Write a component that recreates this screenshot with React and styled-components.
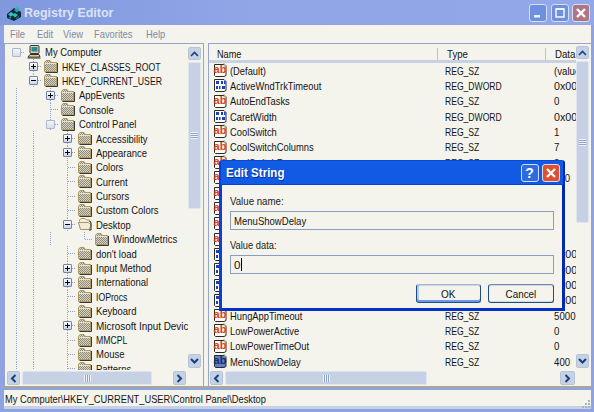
import React from "react";
import styled, { createGlobalStyle } from "styled-components";

const Global = createGlobalStyle`
  html, body { margin: 0; padding: 0; width: 594px; height: 412px; overflow: hidden; background: #8fa3e3; }
  * { box-sizing: border-box; }
  #root { width: 594px; height: 412px; }
`;

const FONT = `"Liberation Sans", Arial, sans-serif`;
const BG = "#f4f3ec";
const PALE = "#c6d1e4";

const Win = styled.div`
  position: relative;
  width: 594px; height: 412px;
  display: flex; flex-direction: column;
  padding: 0 3px 3px 4px;
  background: #8fa3e3;
  font: 11px/14px ${FONT};
  color: #141414;
  overflow: hidden;
`;
/* The reference's face is as tall as 11px Arial but narrower: each text is condensed by its own factor. */
const Txt = styled.span`
  display: inline-block;
  white-space: nowrap;
  transform: scaleX(${p => p.$s || 0.85});
  transform-origin: ${p => p.$center ? "center" : "left"} center;
`;
const TitleBar = styled.div`
  height: 25px; flex: none;
  display: flex; align-items: center;
  margin: 0 -3px 0 -4px; padding: 0 4px 0 4px;
  background: linear-gradient(90deg, #7f98de, #90a5e6 40%, #93a8e8);
`;
const TitleIcon = styled.svg`width: 16px; height: 16px; margin: 0 2px 0 2px; flex: none;`;
const TitleText = styled.div`
  flex: 1;
  font: bold 13px/18px ${FONT};
  color: #dbe3f6;
`;
const WinBtn = styled.div`
  width: 18px; height: 18px; margin-left: 3.5px; flex: none;
  border: 1px solid #d6def5; border-radius: 3px;
  background: ${p => p.$bg};
  display: flex; align-items: center; justify-content: center;
`;
const HelpMark = styled.span`color: #fff; font: bold 14px ${FONT};`;
const MenuBar = styled.div`
  height: 18px; flex: none; background: ${BG};
  display: flex; align-items: center;
  padding-left: 6px;
  font-size: 11px; color: #7d8aa6;
`;
const MenuItem = styled.span`margin-right: ${p => p.$gap}px;`;
const Panes = styled.div`
  height: 345px; flex: none; display: flex; background: ${BG};
  border-bottom: 2px solid #a9a793;
`;
const Pane = styled.div`
  width: ${p => p.$w}px; flex: none;
  display: flex; flex-direction: column;
  border: 1px solid #96a5c8; border-bottom: 0;
  ${p => p.$last ? "border-right: 0;" : ""}
  margin-right: ${p => p.$mr || 0}px;
  min-height: 0;
`;
const PaneMain = styled.div`flex: 1; display: flex; min-height: 0;`;
const Tree = styled.div`flex: 1; min-width: 0; overflow: hidden; padding-left: 3px; padding-top: 1px;`;
const TreeRow = styled.div`height: 14.4px; display: flex; align-items: center; white-space: nowrap; width: 200px;`;
const dots = "repeating-linear-gradient(180deg,#8ea0d4 0 1px,transparent 1px 2px)";
const dotsH = "repeating-linear-gradient(90deg,#8ea0d4 0 1px,transparent 1px 2px)";
const Guide = styled.div`
  width: 17px; height: 100%; flex: none;
  background: ${p => p.$on ? dots : "none"} center / 1px 100% no-repeat;
`;
const Conn = styled.div`
  width: 17px; height: 100%; flex: none;
  display: flex; align-items: center; justify-content: center;
  background:
    ${p => p.$v === "none" ? "linear-gradient(transparent,transparent)" : dots} center ${p => p.$v === "up" ? "top" : "center"} / 1px ${p => p.$v === "up" ? "50%" : "100%"} no-repeat,
    ${dotsH} right center / 50% 1px no-repeat;
`;
const Box = styled.div`
  width: 9px; height: 9px;
  border: 1px solid ${p => p.$pale ? "#a9b7d3" : "#6f84ac"};
  border-radius: 1px;
  background: ${p => p.$pale ? "linear-gradient(#f6f6f0,#d8deea)" : "linear-gradient(#fbfbf8,#cdd6e8)"};
  display: flex; align-items: center; justify-content: center;
  color: #000;
`;
const FolderSvg = styled.svg`width: 14px; height: 13px; flex: none; margin-left: 2px;`;
const ComputerSvg = styled.svg`width: 14px; height: 14px; flex: none; margin-left: 2px;`;
const TreeLabel = styled.span`margin-left: 4px; font-size: 11px; display: inline-flex;`;

const VBar = styled.div`
  width: 13px; flex: none; margin: ${p => p.$top}px ${p => p.$right}px 2px 0;
  display: flex; flex-direction: column;
`;
const HBar = styled.div`
  height: 14px; flex: none; margin: 1px ${p => p.$right}px 1px ${p => p.$left}px;
  display: flex; align-items: stretch;
`;
const SBtn = styled.div`
  flex: none; width: ${p => p.$w || 13}px; height: ${p => p.$h || 13}px;
  background: ${PALE};
  border: 1px solid #eef1f6; outline: 1px solid #b6c3da; outline-offset: -1px;
  border-radius: 2px;
  display: flex; align-items: center; justify-content: center;
  color: #16407e;
`;
const Thumb = styled.div`
  flex: none;
  ${p => p.$h ? `width:${p.$len}px;` : `height:${p.$len}px;`}
  margin: ${p => p.$h ? "0 0 0 2px" : "2px 0 0 0"};
  background: ${PALE};
  border: 1px solid #dfe5f0;
  border-radius: 2px;
  display: flex; align-items: center; justify-content: center;
`;
const GripV = styled.div`
  width: 7px; height: 7px;
  background: repeating-linear-gradient(180deg,#f0f3fa 0 1px,#8fa3d0 1px 2px);
`;
const GripH = styled.div`
  width: 7px; height: 7px;
  background: repeating-linear-gradient(90deg,#f0f3fa 0 1px,#8fa3d0 1px 2px);
`;
const Spacer = styled.div`flex: 1;`;

const List = styled.div`flex: 1; min-width: 0; overflow: hidden; display: flex; flex-direction: column;`;
const Header = styled.div`
  height: 19px; flex: none; display: flex; align-items: center;
  border-bottom: 3px solid ${PALE};
  padding-top: 3px;
`;
const HCell = styled.div`
  width: ${p => p.$w}px; flex: none; height: 12px; line-height: 12px;
  padding-left: ${p => p.$pl}px;
  ${p => p.$sep ? "border-right: 1px solid #b6c3da;" : ""}
  white-space: nowrap;
`;
const LRow = styled.div`height: 15.32px; flex: none; display: flex; align-items: center; white-space: nowrap;`;
const NameCell = styled.div`width: 236px; flex: none; display: flex; align-items: center; padding-left: 4px; overflow: hidden;`;
const TypeCell = styled.div`width: 109px; flex: none;`;
const DataCell = styled.div`flex: 1; min-width: 0; overflow: hidden;`;
const ValSvg = styled.svg`width: 15px; height: 15px; flex: none; margin-right: 2px;`;

const Status = styled.div`
  flex: 1; background: ${BG}; margin-top: 2px;
  display: flex; flex-direction: column;
`;
const StatusText = styled.div`
  height: 16px; flex: none; padding-left: 1px; line-height: 18px; font-size: 11px; white-space: nowrap;
`;
const StatusFoot = styled.div`flex: 1; background: ${PALE}; display: flex; justify-content: flex-end; align-items: flex-end;`;
const Grip = styled.svg`width: 10px; height: 10px; margin-top: -10px; flex: none; overflow: visible;`;

const Dialog = styled.div`
  position: absolute; left: 219px; top: 160px;
  width: 346px; height: 151px;
  display: flex; flex-direction: column;
  background: ${BG};
  border: 3px solid #0b3fdc; border-top: 1px solid #0a49d8;
  border-right-color: #0029b0; border-bottom-color: #0030c4;
  border-radius: 3px 3px 0 0;
`;
const DTitle = styled.div`
  height: 24px; flex: none; display: flex; align-items: center;
  margin: 0 -1px; padding: 0 3px 0 5px;
  background: #115ae4;
  border-bottom: 1px solid #0a3fdc;
`;
const DTitleText = styled.div`
  flex: 1; color: #fff; font: bold 13px/18px ${FONT}; text-shadow: 1px 1px 0 #0a2f9c;
`;
const DBody = styled.div`flex: 1; display: flex; flex-direction: column; padding: 9px 8px 0 8px;`;
const DLabel = styled.div`height: 14px; line-height: 14px; font-size: 11px; color: #222; margin-top: ${p => p.$mt || 0}px;`;
const DInput = styled.div`
  height: 19px; flex: none; margin-top: 3px;
  border: 1px solid #8b9dc3;
  display: flex; align-items: center; padding-left: 3px;
  font-size: 11.5px;
`;
const Caret = styled.span`display: inline-block; width: 1px; height: 13px; background: #000; margin-left: 1px;`;
const DButtons = styled.div`display: flex; justify-content: flex-end; gap: 7px; margin-top: 10px;`;
const DButton = styled.div`
  width: ${p => p.$w}px; height: 19px;
  display: flex; align-items: center; justify-content: center;
  background: ${BG}; font-size: 11.5px;
  border: 1px solid #1c4f82; border-radius: 3px;
  border-top-color: ${p => p.$def ? "#a9b6cf" : "#6f8aa8"};
  box-shadow: ${p => p.$def
    ? "inset 0 -2px 0 #6f96ee, inset 2px 0 0 #b8c8ec, inset 0 1px 0 #cdd6ea"
    : "inset 0 1px 0 #cdd6ea, inset 0 -1px 0 #d5d9e2"};
`;

const Up = () => <svg width="9" height="6" viewBox="0 0 9 6"><path d="M1 5L4.5 1.5L8 5" fill="none" stroke="currentColor" strokeWidth="1.6" /></svg>;
const Down = () => <svg width="9" height="6" viewBox="0 0 9 6"><path d="M1 1L4.5 4.5L8 1" fill="none" stroke="currentColor" strokeWidth="2" /></svg>;
const Left = () => <svg width="7" height="9" viewBox="0 0 7 9"><path d="M5.5 1L2 4.5L5.5 8" fill="none" stroke="currentColor" strokeWidth="2" /></svg>;
const Right = () => <svg width="7" height="9" viewBox="0 0 7 9"><path d="M1.5 1L5 4.5L1.5 8" fill="none" stroke="currentColor" strokeWidth="2" /></svg>;

const Sign = ({ minus }) => (
  <svg width="7" height="7" viewBox="0 0 7 7">
    <path d="M1 3.5H6" stroke="#000" />
    {!minus && <path d="M3.5 1V6" stroke="#000" />}
  </svg>
);

const Folder = ({ open }) => (
  <FolderSvg viewBox="0 0 14 13">
    <defs>
      <pattern id="dith" width="2" height="2" patternUnits="userSpaceOnUse">
        <rect width="2" height="2" fill="#d6d3c4" />
        <rect width="1" height="1" fill="#8f8c7c" />
        <rect x="1" y="1" width="1" height="1" fill="#8f8c7c" />
      </pattern>
    </defs>
    {open ? (
      <g>
        <path d="M1.5 3.5V2L3 .5H7L8.5 2H11.5V4" fill="#f3eedc" stroke="#a8925f" />
        <path d="M.5 4.5H10.5L13.5 7L11 11.5H2.5Z" fill="#f1ecd8" stroke="#a8925f" />
        <path d="M12 3L13 5V12H11" fill="none" stroke="#222" />
      </g>
    ) : (
      <g>
        <path d="M.5 11.5V2.5L2 .5H6L7.5 2.5H12.5V11.5Z" fill="url(#dith)" stroke="#ad9762" />
        <path d="M1 3.5H12" stroke="#e9e2c9" />
        <path d="M13.5 3V12.5H1.5" fill="none" stroke="#3a3a30" />
      </g>
    )}
  </FolderSvg>
);

const Computer = () => (
  <ComputerSvg viewBox="0 0 14 14">
    <rect x="3" y=".5" width="9" height="8" rx="1" fill="#d9d6c6" stroke="#333" />
    <rect x="4.5" y="2" width="6" height="4.5" fill="#2c8a8c" />
    <path d="M1 12L3 9.5H12L13 12Z" fill="#e3dfcf" stroke="#333" />
    <path d="M.5 13H13.5" stroke="#333" />
    <path d="M4 11H10" stroke="#e0a030" />
  </ComputerSvg>
);

const AppIcon = () => (
  <TitleIcon viewBox="0 0 16 16">
    <path d="M1 9L8 3L15 7V12L8 16L1 13Z" fill="#0e2a38" />
    <path d="M2 9.5L5 7L8 9L5 11.5Z" fill="#35c1c8" />
    <path d="M8 5L11 3L14 5L11 7.5Z" fill="#25a7ae" />
    <path d="M6 10L9 8L12 10L9 12.5Z" fill="#2fb9b9" />
    <path d="M3 12L5 11V14L3 13Z" fill="#1c8e97" />
    <path d="M10 13L13 11V12L10 14Z" fill="#1c8e97" />
    <path d="M11 1L13 3L11 4L10 2Z" fill="#2fb9b9" />
  </TitleIcon>
);

const StrIcon = ({ sel }) => (
  <ValSvg viewBox="0 0 15 15">
    <path d="M1.5 1.5H11L13 3.5V12.5L11 13.5H2.5L1.5 12.5Z" fill={sel ? "#5d7fd0" : "#fbfbf7"} stroke="#2b2b2b" />
    <path d="M11 .5L13.5 3H11Z" fill={sel ? "#8aa0d8" : "#e4dcc0"} stroke="#8a7f5c" strokeWidth=".6" />
    <text x="7" y="10" textAnchor="middle" fontFamily={FONT} fontWeight="700" fontSize="11" fill={sel ? "#1a2c68" : "#e0401c"}>ab</text>
  </ValSvg>
);

const DwordIcon = () => (
  <ValSvg viewBox="0 0 15 15">
    <path d="M1.5 1.5H11L13 3.5V12.5L11 13.5H2.5L1.5 12.5Z" fill="#fbfbf7" stroke="#2b2b2b" />
    <g fill="#1740c8">
      <rect x="3" y="3" width="3" height="3" />
      <rect x="8" y="3" width="2" height="3" />
      <rect x="11" y="3" width="1.5" height="3" />
      <rect x="3" y="8" width="2" height="3" />
      <rect x="6" y="8" width="1.5" height="3" />
      <rect x="9" y="8" width="3" height="3" />
    </g>
  </ValSvg>
);

const tree = [
  { t: "My Computer", g: [], box: "pale", icon: "pc", v: "none" },
  { t: "HKEY_CLASSES_ROOT", g: [0], box: "plus" },
  { t: "HKEY_CURRENT_USER", g: [0], box: "minus" },
  { t: "AppEvents", g: [1, 0], box: "plus" },
  { t: "Console", g: [1, 0] },
  { t: "Control Panel", g: [1, 0], box: "pale" },
  { t: "Accessibility", g: [1, 1, 0], box: "plus" },
  { t: "Appearance", g: [1, 1, 0], box: "plus" },
  { t: "Colors", g: [1, 1, 0] },
  { t: "Current", g: [1, 1, 0] },
  { t: "Cursors", g: [1, 1, 0] },
  { t: "Custom Colors", g: [1, 1, 0] },
  { t: "Desktop", g: [1, 1, 0], box: "minus", open: true },
  { t: "WindowMetrics", g: [1, 1, 1, 0], v: "up" },
  { t: "don't load", g: [1, 1, 0] },
  { t: "Input Method", g: [1, 1, 0], box: "plus" },
  { t: "International", g: [1, 1, 0], box: "plus" },
  { t: "IOProcs", g: [1, 1, 0] },
  { t: "Keyboard", g: [1, 1, 0] },
  { t: "Microsoft Input Devices", g: [1, 1, 0], box: "plus", s: 0.9 },
  { t: "MMCPL", g: [1, 1, 0] },
  { t: "Mouse", g: [1, 1, 0] },
  { t: "Patterns", g: [1, 1, 0] },
];

const rows = [
  ["s", "(Default)", "REG_SZ", "(value not set)"],
  ["d", "ActiveWndTrkTimeout", "REG_DWORD", "0x00000000 (0)"],
  ["s", "AutoEndTasks", "REG_SZ", "0"],
  ["d", "CaretWidth", "REG_DWORD", "0x00000001 (1)"],
  ["s", "CoolSwitch", "REG_SZ", "1"],
  ["s", "CoolSwitchColumns", "REG_SZ", "7"],
  ["s", "CoolSwitchRows", "REG_SZ", "3"],
  ["s", "CursorBlinkRate", "REG_SZ", "530"],
  ["s", "DragFullWindows", "REG_SZ", "1"],
  ["s", "DragHeight", "REG_SZ", "4"],
  ["s", "DragWidth", "REG_SZ", "4"],
  ["s", "FontSmoothing", "REG_SZ", "2"],
  ["d", "FontSmoothingType", "REG_DWORD", "0x00000001 (1)"],
  ["d", "ForegroundFlashCount", "REG_DWORD", "0x00000003 (3)"],
  ["d", "ForegroundLockTimeout", "REG_DWORD", "0x00030d40 (200000)"],
  ["d", "GridGranularity", "REG_DWORD", "0x00000000 (0)"],
  ["s", "HungAppTimeout", "REG_SZ", "5000"],
  ["s", "LowPowerActive", "REG_SZ", "0"],
  ["s", "LowPowerTimeOut", "REG_SZ", "0"],
  ["sel", "MenuShowDelay", "REG_SZ", "400"],
];

const X = ({ s = 12 }) => (
  <svg width={s} height={s} viewBox="0 0 12 12">
    <path d="M2 2L10 10M10 2L2 10" stroke="#fff" strokeWidth="2.4" />
  </svg>
);

const isCaps = t => t === t.toUpperCase() || /[A-Z]{3}/.test(t);

export default function App() {
  return (
    <Win>
      <Global />
      <TitleBar>
        <AppIcon />
        <TitleText><Txt $s={0.96}>Registry Editor</Txt></TitleText>
        <WinBtn $bg="#6f8fe0">
          <svg width="12" height="12" viewBox="0 0 12 12"><rect x="2" y="8" width="6" height="2.5" fill="#eef2fb" /></svg>
        </WinBtn>
        <WinBtn $bg="#6f8fe0">
          <svg width="12" height="12" viewBox="0 0 12 12"><rect x="2" y="2" width="8" height="8" fill="none" stroke="#eef2fb" strokeWidth="1.6" /><rect x="2" y="1" width="8" height="2" fill="#eef2fb" /></svg>
        </WinBtn>
        <WinBtn $bg="#ad7682"><X /></WinBtn>
      </TitleBar>
      <MenuBar>
        <MenuItem $gap={9}><Txt>File</Txt></MenuItem>
        <MenuItem $gap={7}><Txt>Edit</Txt></MenuItem>
        <MenuItem $gap={8}><Txt>View</Txt></MenuItem>
        <MenuItem $gap={6}><Txt>Favorites</Txt></MenuItem>
        <MenuItem $gap={0}><Txt>Help</Txt></MenuItem>
      </MenuBar>
      <Panes>
        <Pane $w={200} $mr={4}>
          <PaneMain>
            <Tree>
              {tree.map(r => (
                <TreeRow key={r.t}>
                  {r.g.map((on, i) => <Guide key={i} $on={!!on} />)}
                  <Conn $v={r.v}>
                    {r.box && <Box $pale={r.box === "pale"}>{r.box !== "pale" && <Sign minus={r.box === "minus"} />}</Box>}
                  </Conn>
                  {r.icon === "pc" ? <Computer /> : <Folder open={r.open} />}
                  <TreeLabel><Txt $s={r.s || (isCaps(r.t) ? 0.79 : 0.86)}>{r.t}</Txt></TreeLabel>
                </TreeRow>
              ))}
            </Tree>
            <VBar $top={3} $right={2}>
              <SBtn><Up /></SBtn>
              <Thumb $len={147}><GripV /></Thumb>
              <Spacer />
              <SBtn $h={14}><Down /></SBtn>
            </VBar>
          </PaneMain>
          <HBar $left={2} $right={17}>
            <SBtn $h={14}><Left /></SBtn>
            <Thumb $h $len={130}><GripH /></Thumb>
            <Spacer />
            <SBtn $h={14}><Right /></SBtn>
          </HBar>
        </Pane>
        <Pane $w={383} $last>
          <PaneMain>
            <List>
              <Header>
                <HCell $w={229} $pl={8} $sep><Txt $s={0.83}>Name</Txt></HCell>
                <HCell $w={108} $pl={9} $sep><Txt $s={0.88}>Type</Txt></HCell>
                <HCell $w={29} $pl={9}><Txt $s={0.88}>Data</Txt></HCell>
              </Header>
              {rows.map(([k, n, ty, d]) => (
                <LRow key={n}>
                  <NameCell>
                    {k === "d" ? <DwordIcon /> : <StrIcon sel={k === "sel"} />}
                    <Txt $s={0.85}>{n}</Txt>
                  </NameCell>
                  <TypeCell><Txt $s={0.78}>{ty}</Txt></TypeCell>
                  <DataCell><Txt $s={d.startsWith("0x") ? 0.97 : 0.88}>{d}</Txt></DataCell>
                </LRow>
              ))}
            </List>
            <VBar $top={2} $right={2}>
              <SBtn><Up /></SBtn>
              <Thumb $len={162}><GripV /></Thumb>
              <Spacer />
              <SBtn $h={14}><Down /></SBtn>
            </VBar>
          </PaneMain>
          <HBar $left={1} $right={16}>
            <SBtn $h={14}><Left /></SBtn>
            <Thumb $h $len={202}><GripH /></Thumb>
            <Spacer />
            <SBtn $h={14} $w={15}><Right /></SBtn>
          </HBar>
        </Pane>
      </Panes>
      <Status>
        <StatusText><Txt $s={0.845}>My Computer\HKEY_CURRENT_USER\Control Panel\Desktop</Txt></StatusText>
        <StatusFoot>
          <Grip viewBox="0 0 10 10">
            <g fill="#a9b3c6">
              <rect x="7" y="1" width="2" height="2" />
              <rect x="4" y="4" width="2" height="2" />
              <rect x="7" y="4" width="2" height="2" />
              <rect x="1" y="7" width="2" height="2" />
              <rect x="4" y="7" width="2" height="2" />
              <rect x="7" y="7" width="2" height="2" />
            </g>
          </Grip>
        </StatusFoot>
      </Status>
      <Dialog>
        <DTitle>
          <DTitleText><Txt $s={0.89}>Edit String</Txt></DTitleText>
          <WinBtn $bg="#2c6ae6"><HelpMark>?</HelpMark></WinBtn>
          <WinBtn $bg="#e0502e"><X /></WinBtn>
        </DTitle>
        <DBody>
          <DLabel><Txt $s={0.88}>Value name:</Txt></DLabel>
          <DInput><Txt $s={0.83}>MenuShowDelay</Txt></DInput>
          <DLabel $mt={8}><Txt $s={0.85}>Value data:</Txt></DLabel>
          <DInput>0<Caret /></DInput>
          <DButtons>
            <DButton $w={65} $def><Txt $s={0.87} $center>OK</Txt></DButton>
            <DButton $w={66}><Txt $s={0.86} $center>Cancel</Txt></DButton>
          </DButtons>
        </DBody>
      </Dialog>
    </Win>
  );
}
